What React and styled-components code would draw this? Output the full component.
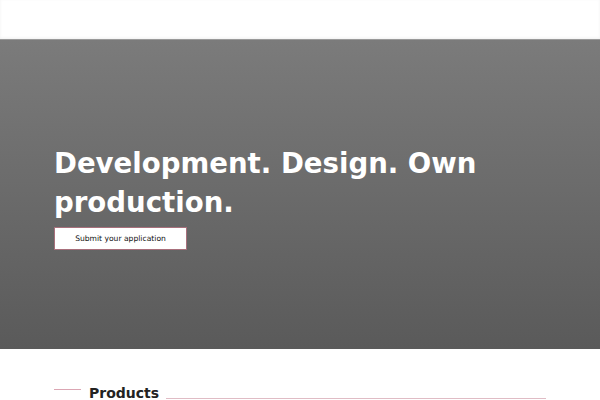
import styled, { createGlobalStyle } from "styled-components";

const GlobalStyle = createGlobalStyle`
  * { box-sizing: border-box; }
  body {
    margin: 0;
    font-family: "DejaVu Sans", "Noto Sans", sans-serif;
    background: #fff;
    color: #222;
  }
`;

// 상단 흰 헤더 + 회색 히어로 + Products 섹션 제목
const App = () => {
  return (
    <>
      <GlobalStyle />
      <Page>
        <Header />
        <Hero>
          <Title>
            Development. Design. Own
            <br />
            production.
          </Title>
          <ApplyButton>Submit your application</ApplyButton>
        </Hero>
        <Section>
          <SectionHead>
            <Dash />
            <SectionTitle>Products</SectionTitle>
            <Rule />
          </SectionHead>
        </Section>
      </Page>
    </>
  );
};
export default App;

const Page = styled.div`
  width: 600px;
  min-height: 400px;
  overflow: hidden;
`;

const Header = styled.header`
  height: 39px;
  background: #fff;
  box-shadow: 0 -1px 3px rgba(0, 0, 0, 0.06) inset;
`;

const Hero = styled.section`
  height: 310px;
  padding: 104px 54px 0;
  background: linear-gradient(180deg, #7b7b7b 0%, #5a5a5a 100%);
  border-top: 1px solid #9a9a9a;
  display: flex;
  flex-direction: column;
  align-items: flex-start;
`;

const Title = styled.h1`
  margin: 0;
  font-size: 27.6px;
  line-height: 39px;
  font-weight: bold;
  color: #fff;
`;

const ApplyButton = styled.button`
  margin-top: 5px;
  height: 23px;
  width: 133px;
  padding: 0;
  background: #fff;
  border: 1px solid #a8707c;
  font-family: "DejaVu Sans", sans-serif;
  font-size: 7.6px;
  color: #111;
  cursor: pointer;
`;

const Section = styled.section`
  padding: 36px 54px 0;
`;

const SectionHead = styled.div`
  display: flex;
  align-items: flex-start;
  width: 492px;
`;

const Dash = styled.span`
  width: 27px;
  height: 1px;
  margin-top: 4px;
  margin-right: 8px;
  background: #dba6b3;
`;

const SectionTitle = styled.h2`
  margin: 0;
  font-size: 14px;
  line-height: 17px;
  font-weight: bold;
  color: #222;
`;

const Rule = styled.span`
  flex: 1;
  height: 1px;
  margin-top: 13px;
  margin-left: 7px;
  background: #e0bcc5;
`;
